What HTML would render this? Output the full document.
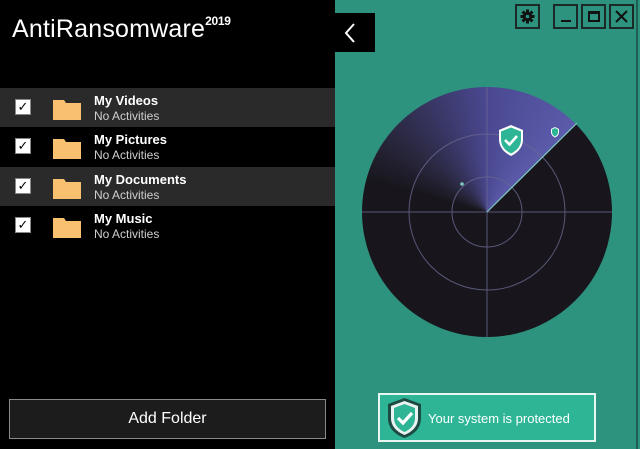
<!DOCTYPE html>
<html><head><meta charset="utf-8"><style>
*{margin:0;padding:0;box-sizing:border-box}
body{width:640px;height:449px;overflow:hidden;position:relative;background:#2e937e;font-family:"Liberation Sans",sans-serif}
#left{position:absolute;left:0;top:0;width:335px;height:449px;background:#000}
.title{position:absolute;left:12px;top:15px;color:#fff;font-size:25px;letter-spacing:0.2px}
.title sup{font-size:12px;font-weight:bold;position:relative;top:-3px;letter-spacing:-0.3px}
.back{position:absolute;left:335px;top:13px;width:40px;height:39px;background:#000}
.row{position:absolute;left:0;width:335px;height:39px}
.row.g{background:#2a2a2a}
.cb{position:absolute;left:15px;top:11px;width:16px;height:16px;background:#fff;border:1px solid #888;color:#000;font-size:13px;line-height:14px;text-align:center}
.fold{position:absolute;left:53px;top:10px;width:28px;height:22px}
.t1{position:absolute;left:94px;top:5px;color:#fff;font-weight:bold;font-size:13px}
.t2{position:absolute;left:94px;top:21px;color:#cfcfcf;font-size:12px}
.add{position:absolute;left:9px;top:399px;width:317px;height:40px;background:#1c1c1c;border:1px solid #8a8a8a;color:#fff;font-size:16px;text-align:center;line-height:38px}
.wb{position:absolute;top:4px;width:25px;height:25px;border:2px solid #1b2a26}
.status{position:absolute;left:378px;top:393px;width:218px;height:49px;background:#2db596;border:2px solid #e8f5f1;color:#fff;font-size:13px}
.status span{position:absolute;left:48px;top:16px}
</style></head><body>
<div id="left">
<div class="title">AntiRansomware<sup>2019</sup></div>
<div class="row g" style="top:88px"><div class="cb">✓</div><svg class="fold" viewBox="0 0 28 22"><path d="M0 2h11l2 3h15v17H0z" fill="#f9c16f"/></svg><div class="t1">My Videos</div><div class="t2">No Activities</div></div>
<div class="row" style="top:127px"><div class="cb">✓</div><svg class="fold" viewBox="0 0 28 22"><path d="M0 2h11l2 3h15v17H0z" fill="#f9c16f"/></svg><div class="t1">My Pictures</div><div class="t2">No Activities</div></div>
<div class="row g" style="top:167px"><div class="cb">✓</div><svg class="fold" viewBox="0 0 28 22"><path d="M0 2h11l2 3h15v17H0z" fill="#f9c16f"/></svg><div class="t1">My Documents</div><div class="t2">No Activities</div></div>
<div class="row" style="top:206px"><div class="cb">✓</div><svg class="fold" viewBox="0 0 28 22"><path d="M0 2h11l2 3h15v17H0z" fill="#f9c16f"/></svg><div class="t1">My Music</div><div class="t2">No Activities</div></div>
<div class="add">Add Folder</div>
</div>
<div class="back"><svg width="40" height="39"><path d="M19 11l-8 9 8 9" stroke="#fff" stroke-width="2" fill="none"/></svg></div>
<div style="position:absolute;left:362px;top:87px;width:250px;height:250px;border-radius:50%;background:conic-gradient(#4a4890 0deg,#5b5bab 45deg,#18161c 45deg,#18161c 285deg,#2a2840 310deg,#4a4890 360deg)"></div>
<svg style="position:absolute;left:362px;top:87px" width="250" height="250">
<g stroke="#6a6890" stroke-width="1" fill="none" opacity=".8">
<circle cx="125" cy="125" r="35"/><circle cx="125" cy="125" r="78"/>
<line x1="0" y1="125" x2="250" y2="125"/><line x1="125" y1="0" x2="125" y2="250"/></g>
<line x1="125" y1="125" x2="215" y2="36" stroke="#7fc9c0" stroke-width="1.2"/>
<g transform="translate(137,38)"><path d="M12 0l12 5v9c0 9-6 14-12 17C6 28 0 23 0 14V5z" fill="#fff"/><path d="M12 2.5l10 4v7.5c0 8-5 12-10 14.5C7 26 2 22 2 14V6.5z" fill="#2db596"/><path d="M6 15l4.5 4.5L18 11" stroke="#fff" stroke-width="2.6" fill="none"/></g>
<g transform="translate(189,40)"><path d="M4 0l4 2v3c0 3-2 4.5-4 5.5C2 9.5 0 8 0 5V2z" fill="#fff"/><path d="M4 1l3 1.5v2.5c0 2.5-1.5 3.5-3 4.5C2.5 8.5 1 7.5 1 5V2.5z" fill="#2db596"/></g>
<circle cx="100" cy="97" r="1.8" fill="#7fc9c0"/>
</svg>
<div class="wb" style="left:515px"><svg width="21" height="21"><g fill="#111" transform="translate(10.5,10.5)"><circle r="4.5"/><rect x="-1.5" y="-7" width="3" height="14"/><rect x="-7" y="-1.5" width="14" height="3"/><rect x="-1.5" y="-7" width="3" height="14" transform="rotate(45)"/><rect x="-1.5" y="-7" width="3" height="14" transform="rotate(-45)"/><circle r="1.8" fill="#2e937e"/></g></svg></div>
<div class="wb" style="left:553px"><div style="position:absolute;left:6px;top:14px;width:10px;height:2px;background:#111"></div></div>
<div class="wb" style="left:581px"><div style="position:absolute;left:5px;top:5px;width:12px;height:11px;border:2px solid #111;border-top-width:3px"></div></div>
<div class="wb" style="left:609px"><svg width="21" height="21"><path d="M5 5l11 11M16 5L5 16" stroke="#111" stroke-width="2"/></svg></div>
<div style="position:absolute;left:636px;top:0;width:2px;height:449px;background:#1f5e52"></div>
<div class="status"><svg style="position:absolute;left:8px;top:3px" width="33" height="40" viewBox="0 0 33 40"><path d="M16.5 0L33 6v14c0 11-8 17-16.5 20C8 37 0 31 0 20V6z" fill="#1e4a44"/><path d="M16.5 3L30 8v12c0 9-6.5 14-13.5 17C9.5 34 3 29 3 20V8z" fill="#e9f3f1"/><path d="M16.5 6L27 10v10c0 7-5 11.5-10.5 14C11 31.5 6 27 6 20V10z" fill="#2db596"/><path d="M10 20l5 5 9-10" stroke="#fff" stroke-width="3.2" fill="none"/></svg><span>Your system is protected</span></div>
</body></html>
